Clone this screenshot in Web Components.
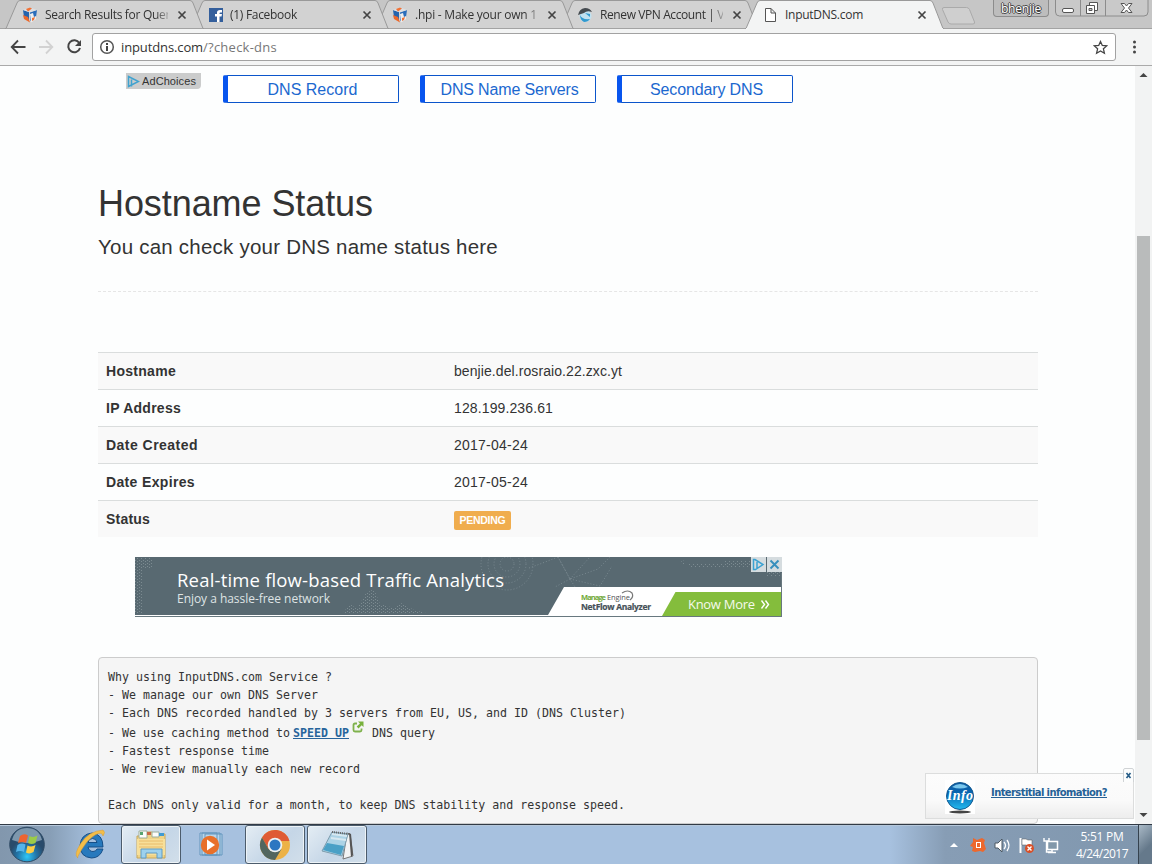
<!DOCTYPE html>
<html lang="en">
<head>
<meta charset="utf-8">
<title>InputDNS.com</title>
<style>
html, body
{
    margin: 0;
    height: 100%;
    overflow: hidden;
    background: #fdfefe;
}
</style>
</head>
<body>
<browser-window>
    <tab-strip slot="tabs">
        <browser-tab><cube-icon slot="icon"></cube-icon><fit-text width="125">Search Results for Quer</fit-text></browser-tab>
        <browser-tab><facebook-icon slot="icon"></facebook-icon><fit-text width="67">(1) Facebook</fit-text></browser-tab>
        <browser-tab><cube-icon slot="icon"></cube-icon><fit-text width="122">.hpi - Make your own 1</fit-text></browser-tab>
        <browser-tab><globe-icon slot="icon"></globe-icon><fit-text width="124">Renew VPN Account | V</fit-text></browser-tab>
        <browser-tab active><file-icon slot="icon"></file-icon><fit-text width="78">InputDNS.com</fit-text></browser-tab>
    </tab-strip>
    <address-bar slot="toolbar"></address-bar>
    <dns-page></dns-page>
    <scroll-bar slot="scroll"></scroll-bar>
    <info-popup slot="popup"></info-popup>
</browser-window>
<task-bar></task-bar>

<script>
class Part extends HTMLElement
{
    constructor()
    {
        super();
        this.attachShadow({mode: "open"}).innerHTML = this.constructor.markup;
    }
}

function part(name, markup)
{
    customElements.define(name, class extends Part { static markup = markup; });
}

part("browser-window",
`<style>
:host
{
    display: flex;
    flex-direction: column;
    position: relative;
    height: 824px;
    font: 12px "Open Sans", "Noto Sans", sans-serif;
    color: #333;
}
.view { flex: 1; min-height: 0; display: flex; }
.page { flex: 1; overflow: hidden; }
</style>
<slot name="tabs"></slot>
<slot name="toolbar"></slot>
<div class="view"><div class="page"><slot></slot></div><slot name="scroll"></slot></div>
<slot name="popup"></slot>`);

part("tab-strip",
`<style>
:host
{
    display: flex;
    height: 29px;
    box-sizing: border-box;
    padding-left: 5px;
    background: #c6c6c6;
    box-shadow: inset 0 -1px #a3a3a3;
}
.new { margin: 6px 0 0 11px; }
.user
{
    box-sizing: border-box;
    width: 56px;
    height: 17px;
    margin-left: 16px;
    border: 1px solid #8c8c8c;
    border-top: 0;
    border-radius: 0 0 4px 4px;
    background: #bdbdbd;
    text-align: center;
    line-height: 17px;
    color: #fff;
    text-shadow: 1px 0 #444, -1px 0 #444, 0 1px #444, 0 -1px #444;
}
.controls { margin-left: 6px; }
svg { display: block; flex: none; }
</style>
<slot></slot>
<svg class="new" width="36" height="20"><path d="M3 1.500H25.500q2 0 3 2L33.500 16q.5 2-1.500 2H10q-2 0-3-2L1.500 3.500Q1 1.500 3 1.500z" fill="#cfcfcf" stroke="#aaa"/></svg>
<div class="user"><fit-text width="40">bhenjie</fit-text></div>
<svg class="controls" width="94" height="18">
<path d="M.5 0V12q0 4 4 4H89q4 0 4-4V0M25.500 0V16M50.500 0V16" fill="#c9c9c9" stroke="#8c8c8c"/>
<rect x="7.500" y="8.500" width="11" height="4" rx="1.500" fill="#fff" stroke="#555"/>
<path d="M34.500 2.500h8v8h-8z" fill="#fff" stroke="#555"/>
<path d="M31.500 5.500h8v8h-8z" fill="#fff" stroke="#555"/><path d="M34 8.500h3v2h-3z" fill="#ccc" stroke="#555"/>
<path d="M66 3.500h3.500l2 2.500 2-2.500H77L73.500 8l3.500 4.500h-3.500l-2-2.500-2 2.500H66L69.500 8z" fill="#fff" stroke="#555"/>
</svg>`);

part("browser-tab",
`<style>
:host
{
    display: flex;
    flex: none;
    align-items: center;
    position: relative;
    width: 199px;
    height: 29px;
    box-sizing: border-box;
    padding: 0 17px 0 17px;
    margin-right: -14px;
    z-index: 1;
    --fill: #d2d2d2;
}
:host(:nth-child(1)) { z-index: 5; }
:host(:nth-child(2)) { z-index: 4; }
:host(:nth-child(3)) { z-index: 3; }
:host(:nth-child(4)) { z-index: 2; }
:host([active]) { z-index: 6; --fill: #f3f4f4; --base: #f3f4f4; }
.shape { position: absolute; left: 0; top: 0; z-index: -1; }
.label { flex: 1; margin-left: 7px; overflow: hidden; white-space: nowrap; }
:host(:not([active])) .label
{
    -webkit-mask-image: linear-gradient(90deg, #000 110px, transparent 128px);
    mask-image: linear-gradient(90deg, #000 110px, transparent 128px);
}
.x { flex: none; margin: 1px 0 0 9px; }
slot[name=icon] { display: block; margin-top: 1px; }
</style>
<svg class="shape" width="199" height="29">
<path d="M0 28.500H1L12 3Q13 .5 15 .5H185Q187 .5 188 3L198 28.500z" fill="var(--fill)"/>
<path d="M0 28.500H1L12 3Q13 .5 15 .5H185Q187 .5 188 3L198 28.500h1" fill="none" stroke="#999"/>
<path d="M1 28.500H198" stroke="var(--base, #a3a3a3)"/>
</svg>
<slot name="icon"></slot>
<div class="label"><slot></slot></div>
<svg class="x" width="10" height="10"><path d="M1.500 1.500l7 7m0-7l-7 7" stroke="#444" stroke-width="1.700"/></svg>`);

const iconBox = `<style>:host { display: block; flex: none; width: 16px; height: 16px; } svg { display: block; }</style>`;

part("cube-icon", iconBox +
`<svg width="16" height="16"><path d="M1 3L7 5V14L2 10z" fill="#2464ae"/><path d="M8 5L15 3 14 10 8 14z" fill="#2a6dbb"/>
<path d="M1 3L8 .5 15 3 8 5.500z" fill="#dedfe2"/><path d="M4 2l4-1.500 2 1-4 3z" fill="#f07135"/><path d="M1 8l5 2 2 5.500L2 12z" fill="#ec682b"/>
<path d="M8 7l3-1 1 4 2-1v3l-5 3.500z" fill="#eee"/><path d="M10 11l3-1-1 3-2 1z" fill="#ef7134"/></svg>`);

part("facebook-icon", iconBox +
`<svg width="16" height="16"><path d="M2 1h14v14H2z" fill="#345f9c"/><path d="M10 15V9.500H8V7h2V5.500Q10 3 13 3h2v2.500h-1.500Q12.500 5.500 12.500 6.500V7H15l-.5 2.500h-2V15z" fill="#fff"/></svg>`);

part("globe-icon", iconBox +
`<svg width="16" height="16"><circle cx="8.500" cy="9" r="6" fill="#c0e1f0"/><path d="M1 8Q2 2 8 1q5 0 7 4-5-2-8 1z" fill="#454b50"/>
<path d="M3 8q2 5 10 4-2 3-6 3-4-2-4-7M8 6l5 1v3z" fill="#3199ce"/></svg>`);

part("file-icon", iconBox +
`<svg width="16" height="16"><path d="M3.500 1.500H9L13.500 6V14.500H3.500zM9 1.500V6h4.500" fill="#fff" stroke="#555"/></svg>`);

part("address-bar",
`<style>
:host
{
    display: flex;
    align-items: center;
    height: 37px;
    box-sizing: border-box;
    padding: 0 14px 0 10px;
    background: #f3f4f4;
    border-bottom: 1px solid #aaa;
    font-size: 13px;
}
svg { display: block; flex: none; }
.nav { width: 82px; }
.box
{
    display: flex;
    align-items: center;
    flex: 1;
    height: 28px;
    box-sizing: border-box;
    padding: 0 7px 0 6px;
    border: 1px solid #a2a2a2;
    border-radius: 3px;
    background: #fff;
}
.url { flex: 1; margin-left: 6px; display: flex; }
.path { color: #777; }
.menu { margin-left: 15px; }
</style>
<svg class="nav" height="20" fill="none" stroke-width="1.800">
<path d="M15.500 10H2M8 3.500L1.700 10 8 16.500" stroke="#444"/>
<path d="M29 10h13M36 3.500L42.300 10 36 16.500" stroke="#d2d2d2"/>
<path d="M69.300 6A6 6 0 1 0 70 11" stroke="#444" stroke-width="2"/><path d="M71 3v6h-6z" fill="#444"/>
</svg>
<div class="box">
<svg width="16" height="16"><circle cx="8" cy="8" r="6.300" fill="none" stroke="#555" stroke-width="1.500"/><path d="M7 7h2v5H7zM7 4h2v2H7z" fill="#444"/></svg>
<div class="url"><fit-text width="82">inputdns.com</fit-text><fit-text class="path" width="74">/?check-dns</fit-text></div>
<svg width="15" height="15"><path d="M7.500 1.500l1.800 4 4.400.4-3.300 2.900 1 4.400-3.900-2.300-3.900 2.300 1-4.400L1.300 5.900l4.400-.4z" fill="none" stroke="#444" stroke-width="1.300"/></svg>
</div>
<svg class="menu" width="7" height="16" fill="#444"><circle cx="3.500" cy="3" r="1.500"/><circle cx="3.500" cy="8" r="1.500"/><circle cx="3.500" cy="13" r="1.500"/></svg>`);

part("scroll-bar",
`<style>
:host
{
    display: flex;
    flex-direction: column;
    align-items: center;
    width: 17px;
    box-sizing: border-box;
    padding: 6px 0 6px;
    background: #f2f3f3;
}
.track { flex: 1; padding-top: 158px; }
.thumb { width: 13px; height: 504px; background: #b9bbbb; }
svg { display: block; }
</style>
<svg width="9" height="6"><path d="M.5 5L4.500 1 8.500 5z" fill="#444"/></svg>
<div class="track"><div class="thumb"></div></div>
<svg width="9" height="6"><path d="M.5 1L4.500 5 8.500 1z" fill="#444"/></svg>`);

part("dns-page",
`<style>
:host { display: block; font: 14px/20px "Liberation Sans", Arial, sans-serif; color: #333; }
.links { display: flex; align-items: flex-start; gap: 21px; padding: 7px 0 0 126px; height: 37px; box-sizing: border-box; }
ad-choices { margin-right: 1px; }
nav-button { margin-top: 2px; }
main { width: 940px; margin-left: 98px; }
h1, h2 { margin: 0; font-weight: 400; }
h1 { font-size: 36px; line-height: 40px; padding-top: 81px; }
h2 { font-size: 20.500px; line-height: 24px; margin-top: 11px; }
hr { margin: 32px 0 60px; border: 0; border-top: 1px dashed #e6e6e6; }
banner-ad { margin: 20px 0 40px 37px; }
</style>
<div class="links">
<ad-choices></ad-choices>
<nav-button><fit-text width="90">DNS Record</fit-text></nav-button>
<nav-button><fit-text width="138">DNS Name Servers</fit-text></nav-button>
<nav-button><fit-text width="113">Secondary DNS</fit-text></nav-button>
</div>
<main>
<h1><fit-text width="275">Hostname Status</fit-text></h1>
<h2><fit-text width="400">You can check your DNS name status here</fit-text></h2>
<hr>
<status-row odd><fit-text slot="name" width="70">Hostname</fit-text><fit-text width="168">benjie.del.rosraio.22.zxc.yt</fit-text></status-row>
<status-row><fit-text slot="name" width="75">IP Address</fit-text><fit-text width="99">128.199.236.61</fit-text></status-row>
<status-row odd><fit-text slot="name" width="92">Date Created</fit-text><fit-text width="74">2017-04-24</fit-text></status-row>
<status-row><fit-text slot="name" width="89">Date Expires</fit-text><fit-text width="74">2017-05-24</fit-text></status-row>
<status-row odd><fit-text slot="name" width="44">Status</fit-text><status-label><fit-text width="46">PENDING</fit-text></status-label></status-row>
<banner-ad></banner-ad>
<service-note></service-note>
</main>`);

part("ad-choices",
`<style>
:host
{
    display: flex;
    align-items: center;
    width: 75px;
    height: 16px;
    background: #cbcccc;
    border-radius: 0 0 4px 0;
    font-size: 11px;
    line-height: 16px;
}
svg { margin: 0 2px 0 1px; }
</style>
<svg width="13" height="13" fill="none" stroke="#3fa2cf" stroke-width="1.500"><path d="M1.500 1.500v10L11.500 6.500zM4.500 4.500v7"/></svg>
<fit-text width="54">AdChoices</fit-text>`);

part("nav-button",
`<style>
:host
{
    display: block;
    box-sizing: border-box;
    width: 176px;
    height: 28px;
    padding-right: 1px;
    border: 1px solid #0b55cb;
    border-left: 5px solid #0855ee;
    border-radius: 2px;
    text-align: center;
    font-size: 16px;
    line-height: 27px;
    color: #1c68cf;
    background: #fff;
}
</style>
<slot></slot>`);

part("status-row",
`<style>
:host { display: flex; height: 37px; box-sizing: border-box; border-top: 1px solid #dadddd; padding: 8px; }
:host([odd]) { background: #f9f9f9; }
.name { width: 348px; font-weight: 700; }
</style>
<div class="name"><slot name="name"></slot></div>
<div><slot></slot></div>`);

part("status-label",
`<style>
:host
{
    display: inline-block;
    box-sizing: border-box;
    width: 57px;
    height: 19px;
    margin-top: 2px;
    border-radius: 2px;
    background: #f0ad4e;
    color: #fff;
    font-weight: 700;
    font-size: 10.500px;
    line-height: 19px;
    text-align: center;
}
</style>
<slot></slot>`);

part("banner-ad",
`<style>
:host { display: block; width: 647px; height: 60px; }
svg { display: block; font-family: "Open Sans", "Noto Sans", sans-serif; }
</style>
<svg width="647" height="60">
<defs>
<pattern id="dots" width="4" height="3" patternUnits="userSpaceOnUse"><path d="M0 0h1v1H0zM2 1h1v1H2z" fill="#8b999e"/></pattern>
</defs>
<path d="M0 0h647v60H0z" fill="#586971"/>
<g fill="url(#dots)" opacity=".7">
<path d="M0 1h18v11H7v45H0zM207 57l8-10 7 5 9-16 8-4 6 15 14 4 8-5 12 7 16 4z"/>
<path d="M553 7h60v3h-60zM545 5l5-2v7zM590 4h26v6h-26zM631 15h16v4h-16z"/>
</g>
<g fill="none" stroke="#84939a" stroke-dasharray="1 2" opacity=".75">
<circle cx="372" cy="7" r="7"/><circle cx="372" cy="7" r="13"/><circle cx="372" cy="7" r="19"/><circle cx="372" cy="7" r="26"/>
<path d="M394 11l11-4 18-7 12 22 28-10 12-12M435 22l20-22M435 22l-15 8M435 22l30 7 12-20M423 0l12 22 5 8"/>
</g>
<path d="M0 58h413l16-28h218v29H0z" fill="#fff"/>
<path d="M527 59l13.500-24H647v24z" fill="#84bd3c"/>
<path d="M0 59.500h647M646.500 16V60" stroke="#68787f"/>
<text x="42" y="29.500" font-size="18.500" fill="#fff" textLength="327">Real-time flow-based Traffic Analytics</text>
<text x="42" y="45.500" font-size="12" fill="#dfe4e5" textLength="153">Enjoy a hassle-free network</text>
<text x="446" y="43" font-size="7.500" font-weight="700" fill="#72a93a" textLength="25">Manage</text>
<text x="472" y="43" font-size="7.500" fill="#555" textLength="23">Engine</text>
<path d="M487 36q6-4 10 0 2 4-2 7" fill="none" stroke="#777" stroke-width="1.200"/>
<text x="446" y="52.500" font-size="8.500" font-weight="700" fill="#465158" stroke="#465158" stroke-width=".2" textLength="70">NetFlow Analyzer</text>
<text x="553" y="52" font-size="13" fill="#f5faec" textLength="67">Know More</text>
<path d="M626.500 43.500l3 4-3 4M630.500 43.500l3 4-3 4" fill="none" stroke="#fff" stroke-width="1.400"/>
<path d="M616 0h15v15h-15zM632 0h15v15h-15z" fill="#d5dcdf"/>
<path d="M618.500 2.500v10h2L628 7.500 620 2.500zM622 5v6" fill="none" stroke="#3ba2d2" stroke-width="1.500"/>
<path d="M635.500 3.500l8 8m0-8l-8 8" stroke="#378fbd" stroke-width="1.900"/>
</svg>`);

part("service-note",
`<style>
:host
{
    display: block;
    height: 167px;
    box-sizing: border-box;
    padding: 10px 9px;
    border: 1px solid #ccc;
    border-radius: 4px;
    background: #f5f5f5;
    font: 11.600px/18px "DejaVu Sans Mono", "Liberation Mono", monospace;
}
div { height: 18px; white-space: pre; }
.speed { display: flex; height: 20px; line-height: 22px; }
a { color: #27649b; font-weight: 700; margin-left: 3px; }
a fit-text { text-decoration: underline; }
svg { margin: -1px 8px 0 3px; }
</style>
<div><fit-text width="224">Why using InputDNS.com Service ?</fit-text></div>
<div><fit-text width="210">- We manage our own DNS Server</fit-text></div>
<div><fit-text width="518">- Each DNS recorded handled by 3 servers from EU, US, and ID (DNS Cluster)</fit-text></div>
<div class="speed"><fit-text width="182">- We use caching method to</fit-text><a><fit-text width="56">SPEED UP</fit-text></a><svg width="12" height="12"><path d="M5 2.500H3Q1.500 2.500 1.500 4v5q0 1.500 1.500 1.500h5Q9.500 10.500 9.500 9V7.500" fill="none" stroke="#7fb24c" stroke-width="1.800"/><path d="M6 .5h5.500V6L9.700 4.200 6.500 7.400 4.700 5.600 8 2.400z" fill="#78b13c"/></svg><fit-text width="63">DNS query</fit-text></div>
<div><fit-text width="161">- Fastest response time</fit-text></div>
<div><fit-text width="252">- We review manually each new record</fit-text></div>
<div></div>
<div><fit-text width="517">Each DNS only valid for a month, to keep DNS stability and response speed.</fit-text></div>`);

part("info-popup",
`<style>
:host
{
    display: flex;
    align-items: center;
    position: absolute;
    left: 925px;
    top: 773px;
    width: 209px;
    height: 46px;
    box-sizing: border-box;
    padding-left: 19px;
    border: 1px solid #dcdddd;
    background: linear-gradient(#fcfcfc, #fafafa 60%, #ededed);
    font: 700 10px "DejaVu Sans", Verdana, sans-serif;
}
a { color: #256196; margin: -8px 0 0 16px; }
a fit-text { text-decoration: underline; }
.logo { flex: none; margin-top: 2px; background: #fff; }
.close { position: absolute; right: -1px; top: -6px; }
</style>
<svg class="logo" width="30" height="34">
<defs><linearGradient id="ball" x2="0" y2="1"><stop stop-color="#105aa2"/><stop offset=".4" stop-color="#0866b1"/><stop offset="1" stop-color="#23baf0"/></linearGradient></defs>
<ellipse cx="15" cy="32" rx="11" ry="1.500" fill="#444"/><circle cx="15" cy="16" r="13.500" fill="url(#ball)" stroke="#12598f"/>
<path d="M7 7q8-6 16 0-8 3-16 0" fill="#7ac7ed"/>
<text x="2" y="20" font-family="Liberation Serif, serif" font-size="14" font-style="italic" font-weight="700" fill="#fff" textLength="26">Info</text></svg>
<a><fit-text width="116">Interstitial infomation?</fit-text></a>
<svg class="close" width="11" height="14"><path d="M.5 14V2Q.5.500 2 .5H9Q10.500.500 10.500 2V14" fill="#fcfdfd" stroke="#d0d3d5"/><path d="M3.500 5l4 5m0-5l-4 5" stroke="#285e88" stroke-width="1.700"/></svg>`);

part("task-bar",
`<style>
:host
{
    display: flex;
    height: 40px;
    box-sizing: border-box;
    border-top: 1px solid #313a45;
    background: linear-gradient(90deg, #8297ad, #879eb6 50px, #a7c1df 95px, #a7c1df 890px, #879db5 945px, #8097ae);
    box-shadow: inset 0 1px #b5c7da;
    font: 12px "Open Sans", "Noto Sans", sans-serif;
    color: #fff;
}
svg { display: block; }
.start { margin: 1px 0 0 8px; }
.ie { margin: 2px 15px 0 28px; }
.wmp { margin: 5px 18px 0 16px; }
.notepad { margin-left: 2px; }
.tray { margin: 12px 0 0 auto; }
.clock { width: 56px; margin: 3px 8px 0 15px; text-align: center; line-height: 17px; }
.desktop { width: 14px; box-sizing: border-box; border-left: 1px solid #35424e; background: linear-gradient(135deg, #a9b9c6, #65798b 60%); }
</style>
<svg class="start" width="38" height="38">
<defs><radialGradient id="orb" cy=".85"><stop stop-color="#2dc8f8"/><stop offset=".55" stop-color="#2376a9"/><stop offset="1" stop-color="#294b6b"/></radialGradient></defs>
<circle cx="19" cy="18.500" r="17.300" fill="url(#orb)" stroke="#304b65"/><path d="M4 14Q7 2 19 2t15 12Q19 20 4 14" fill="#b5cad9" opacity=".6"/>
<path d="M12 10q4-3 8-.5L18 17q-3-2-8 0z" fill="#ee6430"/><path d="M21.500 10q4 2 8-.5L27.500 17q-4 2-7.500 0z" fill="#9bcb48"/>
<path d="M9.500 19q4-2.500 8-.5L16 26q-4-2-8 0z" fill="#54b5eb"/><path d="M19.500 19.500q4 2 8-.5L25.500 26q-4 2.500-7.500.5z" fill="#fccd45"/></svg>
<svg class="ie" width="32" height="34">
<path d="M29 20H14q1 4.500 5 4.500 3 0 4-2.500h6Q26 31 17.500 31 6 30 6 18.500 7 7 18 6q11 1 11 14M14 15.500h9q-.5-4-4.500-4t-4.500 4" fill="#2779bd" stroke="#174f87"/>
<path d="M4 31q-5-3 3-15T29 3Q32 5 29 9 28 4 21 8T8 22 4 31" fill="#f3bd48" stroke="#d79c36" stroke-width=".5"/></svg>
<task-button><svg width="34" height="32">
<path d="M3 7h8V3h7l3 2h10v24H3z" fill="#efd387" stroke="#c7a75b"/><path d="M5 2h8v7H5zM18 3h7v5h-7z" fill="#fcfcfa" stroke="#9eaf9a"/>
<path d="M6 3h3v3H6z" fill="#57a36f"/><path d="M13 3h4v3h-4z" fill="#ca6a45"/><path d="M25 4h5v3h-5z" fill="#3f9ad2"/><path d="M3 10h28v16H3z" fill="#f7df99"/><path d="M5 12h24M5 15h24M5 18h24" stroke="#e8bb6a"/>
<path d="M7 29v-9h21v9h-5v-5H12v5z" fill="#9dd1ed" stroke="#5e9bc5"/></svg></task-button>
<svg class="wmp" width="30" height="30"><path d="M8 4h17v21H8zM5 3h18v22H5zM3 3h17v22H3z" fill="#b8d5ea" stroke="#6295bd"/>
<circle cx="13" cy="15" r="9.200" fill="#e8702a"/><path d="M10 9.500v11l8-5.500z" fill="#fff"/></svg>
<task-button><svg width="32" height="32">
<circle cx="16" cy="16" r="15" fill="#ecb247"/><path d="M3 8.500A15 15 0 0 1 30.500 12H16L9.500 20z" fill="#df5b34"/><path d="M3 8.500A15 15 0 0 0 16 31L22.500 20 16 23 9.500 20z" fill="#52665f"/>
<circle cx="16" cy="16" r="7.300" fill="#edf2f4"/><circle cx="16" cy="16" r="5.500" fill="#2c77c1"/></svg></task-button>
<task-button class="notepad"><svg width="34" height="32"><path d="M27 4l3 1 3 22-10 3z" fill="#f2f3f4" stroke="#777"/><path d="M29 4l2 1 2 21-2 2z" fill="#555"/>
<path d="M12 3l16 2-6 22L2 22z" fill="#acd3e6" stroke="#7d9cad"/><path d="M7 14l17 3-3 9L3 21z" fill="#4aa0c6"/>
<path d="M12 5l15 2M11 9l15 2" stroke="#d7e8f0" stroke-width="2"/><path d="M12 3l17 2" stroke="#666" stroke-width="2" stroke-dasharray="1"/></svg></task-button>
<svg class="tray" width="112" height="18">
<path d="M3 10l4-4 4 4z" fill="#fff"/>
<path d="M26 1l4 2 5-2 3 2-1 3 2 6-3 3-3-1-5 1-3-1 1-4-3-1 3-4z" fill="#ed682d"/><rect x="29.500" y="5.500" width="4" height="5" fill="none" stroke="#fff"/>
<path d="M48 6h3l4-4v13l-4-4h-3z" fill="#fff" stroke="#4d5862"/><path d="M57 5q3 3.500 0 7M60 3q4 5.500 0 11" fill="none" stroke="#fff" stroke-width="1.300"/>
<path d="M73.500 1v15" stroke="#fff" stroke-width="2"/><path d="M75 2h4l2 1h4v6h-4l-2-1h-4z" fill="#fff" stroke="#555" stroke-width=".5"/>
<circle cx="82.500" cy="11.500" r="4.500" fill="#d94f27"/><path d="M80.500 9.500l4 4m0-4l-4 4" stroke="#fff" stroke-width="1.400"/>
<path d="M100.500 4.500h10v8h-10zM105 13v3m-4-.5h8" fill="#8298aa" stroke="#fff" stroke-width="1.500"/><path d="M97 1v3h5V1M99.500 4v11h5" fill="none" stroke="#fff" stroke-width="1.400"/></svg>
<div class="clock"><fit-text width="43">5:51 PM</fit-text><fit-text width="52">4/24/2017</fit-text></div>
<div class="desktop"></div>`);

part("task-button",
`<style>
:host
{
    display: flex;
    flex: none;
    align-items: center;
    justify-content: center;
    width: 60px;
    height: 39px;
    box-sizing: border-box;
    border: 1px solid #4c5c6c;
    border-radius: 3px;
    background: linear-gradient(135deg, #e4edf4, #c5d6e7 55%, #d2dfea);
    box-shadow: inset 0 0 0 1px #edf3f7;
}
</style>
<slot></slot>`);

// Spreads its text over the given width with letter-spacing.
// Defined last, so that the fonts of its ancestors apply when it measures.
customElements.define("fit-text", class extends HTMLElement
{
    constructor()
    {
        super();
        this.attachShadow({mode: "open"}).innerHTML =
        `<style>:host { display: inline-block; white-space: pre; }</style><slot></slot>`;
    }

    connectedCallback()
    {
        var width = Number(this.getAttribute("width"));
        var natural = this.getBoundingClientRect().width;
        this.style.letterSpacing = (width - natural)/this.textContent.length + "px";
    }
});
</script>
</body>
</html>
